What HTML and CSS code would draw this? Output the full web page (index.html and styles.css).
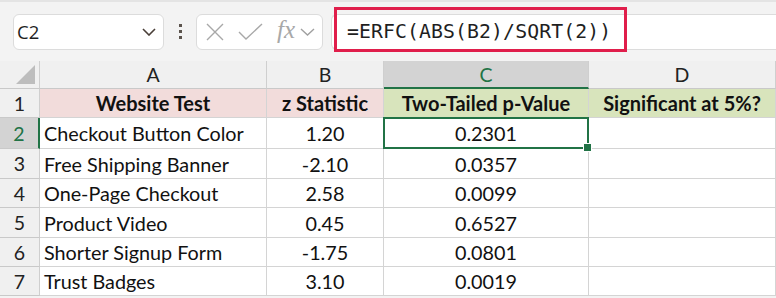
FILE: index.html
```html
<!DOCTYPE html>
<html lang="en">
<head>
  <meta charset="UTF-8" />
  <title>p-Value sheet</title>
  <link rel="stylesheet" href="styles.css">
</head>
<body>
  <div class="toolbar">
    <div class="namebox">
      <span>C2</span>
      <svg class="chev" width="14" height="8" viewBox="0 0 14 8"><path d="M1 1 L7 7 L13 1" fill="none" stroke="#4a3f38" stroke-width="1.6"/></svg>
    </div>
    <div class="dots"><i></i><i></i><i></i></div>
    <div class="fxbox">
      <svg width="20" height="18" viewBox="0 0 20 18"><path d="M2 1 L18 17 M18 1 L2 17" stroke="#a8a8a8" stroke-width="1.4" fill="none"/></svg>
      <svg width="25" height="18" viewBox="0 0 25 18"><path d="M1 9 L8 16 L24 1" stroke="#a8a8a8" stroke-width="1.4" fill="none"/></svg>
      <span class="fx">fx</span>
      <svg class="chev2" width="15" height="8" viewBox="0 0 15 8"><path d="M1 1 L7.5 7 L14 1" fill="none" stroke="#a0a0a0" stroke-width="1.4"/></svg>
    </div>
    <div class="formula">
      <span class="ftext">=ERFC(ABS(B2)/SQRT(2))</span>
      <div class="highlight"></div>
    </div>
  </div>

  <div class="sheet">
    <div class="corner"><div class="tri"></div></div>
    <div class="colhead">A</div>
    <div class="colhead">B</div>
    <div class="colhead sel">C</div>
    <div class="colhead">D</div>

    <div class="rowhead">1</div>
    <div class="cell th pink">Website Test</div>
    <div class="cell th pink">z Statistic</div>
    <div class="cell th green">Two-Tailed p-Value</div>
    <div class="cell th green">Significant at 5%?</div>

    <div class="rowhead sel">2</div>
    <div class="cell">Checkout Button Color</div>
    <div class="cell mid">1.20</div>
    <div class="cell mid active">0.2301<span class="handle"></span></div>
    <div class="cell"></div>

    <div class="rowhead">3</div>
    <div class="cell">Free Shipping Banner</div>
    <div class="cell mid">-2.10</div>
    <div class="cell mid">0.0357</div>
    <div class="cell"></div>

    <div class="rowhead">4</div>
    <div class="cell">One-Page Checkout</div>
    <div class="cell mid">2.58</div>
    <div class="cell mid">0.0099</div>
    <div class="cell"></div>

    <div class="rowhead">5</div>
    <div class="cell">Product Video</div>
    <div class="cell mid">0.45</div>
    <div class="cell mid">0.6527</div>
    <div class="cell"></div>

    <div class="rowhead">6</div>
    <div class="cell">Shorter Signup Form</div>
    <div class="cell mid">-1.75</div>
    <div class="cell mid">0.0801</div>
    <div class="cell"></div>

    <div class="rowhead">7</div>
    <div class="cell">Trust Badges</div>
    <div class="cell mid">3.10</div>
    <div class="cell mid">0.0019</div>
    <div class="cell"></div>
  </div>
</body>
</html>
```

FILE: styles.css
```css
body {
  margin: 0;
  background-color: #f3f3f3;
  font-family: "Lato", sans-serif;
  overflow: hidden;
}
.toolbar {
  border-top: 2px solid #e4e4e4;
  display: flex;
  align-items: center;
  padding-left: 13px;
  box-sizing: border-box;
  height: 61px;
}
.namebox {
  width: 151px;
  height: 36px;
  box-sizing: border-box;
  background: #fff;
  border: 1px solid #dcdcdc;
  border-radius: 6px;
  display: flex;
  align-items: center;
  justify-content: space-between;
  padding: 0 7px 0 3px;
  font-family: "Open Sans", sans-serif;
  font-size: 18.5px;
  color: #1f1f1f;
}
.dots {
  width: 32px;
  display: flex;
  flex-direction: column;
  align-items: center;
  gap: 3px;
}
.dots i {
  width: 3px;
  height: 3px;
  background: #5b534d;
}
.fxbox {
  width: 127px;
  height: 36px;
  box-sizing: border-box;
  background: #fff;
  border: 1px solid #dcdcdc;
  border-radius: 6px;
  display: flex;
  align-items: center;
  padding-left: 8px;
}
.fxbox svg {
  margin-right: 13px;
}
.fxbox .fx {
  font-family: "Liberation Serif", serif;
  font-style: italic;
  font-size: 25px;
  color: #a8a8a8;
  margin-left: 1px;
  margin-right: 5px;
  margin-top: -4px;
}
.fxbox .chev2 {
  margin-right: 0;
}
.formula {
  position: relative;
  flex: 1;
  margin-left: 8px;
  height: 36px;
  background: #fff;
  border: 1px solid #dcdcdc;
  border-right: none;
  border-radius: 6px 0 0 6px;
  box-sizing: border-box;
  display: flex;
  align-items: center;
  padding-left: 15px;
}
.ftext {
  font-family: "DejaVu Sans Mono", monospace;
  font-size: 19.8px;
  color: #1f1f1f;
  letter-spacing: 0.1px;
}
.highlight {
  position: absolute;
  left: 2px;
  top: -8px;
  width: 293px;
  height: 45px;
  border: 3px solid #e01e4b;
  box-sizing: border-box;
}
.sheet {
  display: grid;
  grid-template-columns: 40px 227px 117px 205px 187px;
  grid-template-rows: 28px 29px 31px 30px 29px 30px 29px 29px 10px;
  font-size: 19.8px;
  color: #111;
}
.corner, .colhead, .rowhead {
  background: #f0f0f0;
  border-right: 1px solid #cfcfcf;
  border-bottom: 1px solid #c9c9c9;
  box-sizing: border-box;
  display: flex;
  align-items: center;
  justify-content: center;
  color: #222;
  font-size: 19.5px;
}
.corner {
  position: relative;
}
.tri {
  position: absolute;
  right: 4px;
  bottom: 4px;
  width: 0;
  height: 0;
  border-left: 19px solid transparent;
  border-bottom: 19px solid #bdbdbd;
}
.colhead.sel {
  background: #d3d3d3;
  color: #217346;
  border-bottom: 2px solid #217346;
}
.rowhead.sel {
  background: #d3d3d3;
  color: #217346;
  border-right: 2px solid #217346;
}
.cell {
  background: #fff;
  border-right: 1px solid #d4d4d4;
  border-bottom: 1px solid #d4d4d4;
  box-sizing: border-box;
  display: flex;
  align-items: center;
  padding-left: 4px;
  white-space: nowrap;
}
.cell.mid {
  justify-content: center;
  padding-left: 0;
}
.cell.th {
  font-weight: bold;
  font-size: 20px;
  justify-content: center;
  padding-left: 0;
}
.pink {
  background: #f2dcdb;
}
.green {
  background: #d8e4bc;
}
.active {
  position: relative;
  border: 2px solid #217346;
  margin: -1px 0 0 -1px;
}
.handle {
  position: absolute;
  right: -5px;
  bottom: -5px;
  width: 7px;
  height: 7px;
  background: #217346;
  border: 1px solid #fff;
}
```
